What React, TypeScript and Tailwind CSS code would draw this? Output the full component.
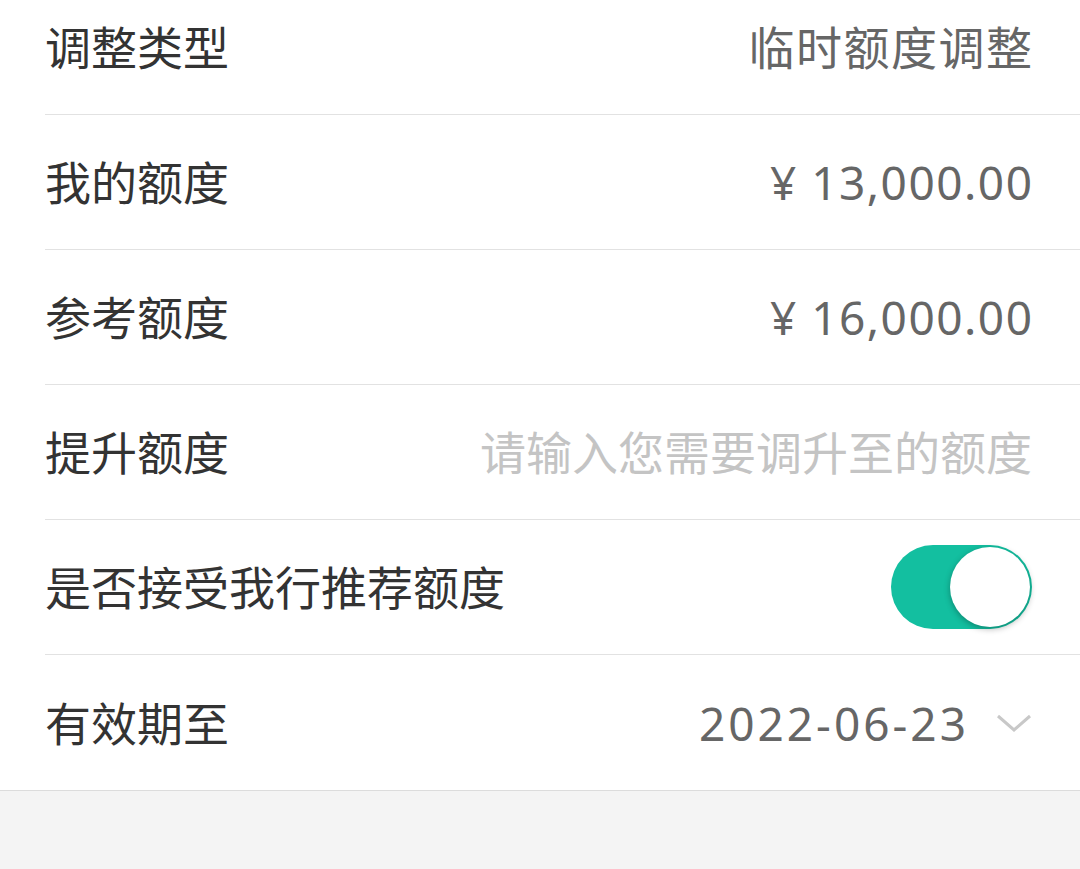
import React from 'react';

const font = { fontFamily: '"Noto Sans", "Noto Sans CJK SC", sans-serif' };

const Row = ({ label, last, children }: { label: string; last?: boolean; children: React.ReactNode }) => (
	<div
		className={`flex items-center justify-between h-[135px] ml-[45px] pr-[48px] ${last ? '' : 'border-b border-[#e2e2e2]'}`}
	>
		<span className="text-[46px] text-[#333333] leading-none">{label}</span>
		<div className="flex items-center">{children}</div>
	</div>
);

const Toggle = () => (
	<div className="relative w-[141px] h-[84px] rounded-full bg-[#13bfa0]">
		<div className="absolute right-[2px] top-[2px] w-[80px] h-[80px] rounded-full bg-white shadow-[0_2px_6px_rgba(0,0,0,0.3)]" />
	</div>
);

export default function App() {
	return (
		<div className="w-[1080px] h-[869px] bg-[#f4f4f4] overflow-hidden" style={font}>
			<div className="bg-white -mt-[20px] border-b border-[#dcdcdc]">
				<Row label="调整类型">
					<span className="text-[46px] text-[#666666] leading-none tracking-[1.5px] -mr-[1.5px]">临时额度调整</span>
				</Row>
				<Row label="我的额度">
					<span className="text-[46px] text-[#666666] leading-none tracking-[1.5px] -mr-[1.5px]">¥ 13,000.00</span>
				</Row>
				<Row label="参考额度">
					<span className="text-[46px] text-[#666666] leading-none tracking-[1.5px] -mr-[1.5px]">¥ 16,000.00</span>
				</Row>
				<Row label="提升额度">
					<span className="text-[46px] text-[#c4c4c4] leading-none">请输入您需要调升至的额度</span>
				</Row>
				<Row label="是否接受我行推荐额度">
					<Toggle />
				</Row>
				<Row label="有效期至" last>
					<span className="text-[46px] text-[#666666] leading-none tracking-[3px]">2022-06-23</span>
					<svg width="36" height="22" viewBox="0 0 36 22" className="ml-[27px]">
						<path d="M2 4 L18 18 L34 4" fill="none" stroke="#c8c8c8" strokeWidth="3" />
					</svg>
				</Row>
			</div>
		</div>
	);
}
